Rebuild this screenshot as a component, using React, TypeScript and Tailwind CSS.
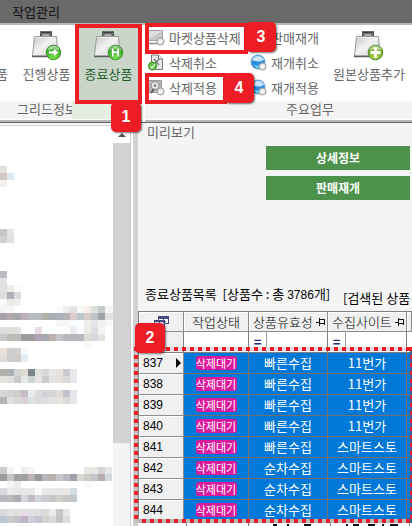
import type { ReactNode } from "react"
import { clsx } from "clsx"

type Cells = [y: number, start: number, colors: string]

// Redacted text in the tree panel, 7px blocks
const mosaic: Cells[] = [
  [166, 0, "e0e0df"],
  [173, 0, "d2c9c4 dde8f3"],
  [180, 0, "f3f0f1"],
  [229, 0, "cac6c8 e2e6e4"],
  [236, 0, "d0d0cf dfe2e1"],
  [271, 0, "bbbbc0"],
  [278, 0, "e1e2e1"],
  [285, 0, "e1e1df efecea f8fafd"],
  [292, 0, "dfddd9 b0b0b7 dcdadb"],
  [299, 0, "f9f9f7 ebe8e5 eaefef"],
  [306, 0, "f5f3f5 f7f6f7"],
  [306, 8, "fafafa eeecec e2e1e4 f8f8f8 f8efeb dcdfda c6cccb f3f4f3 f6f6f6"],
  [313, 0, "a8a3aa b3a8ab a6a7ac bcafbb b7bcbf babdbf b4b1aa a9acb0 abafba b5b5b7 d8cccd bcc6cf d6cdc9 bfc6c5 a0a4a7 dfe0df dfe1e1"],
  [320, 8, "f8f7f7 f8f8f9 f8fbfd fbfcfd f0efed e3e6e9 f3f1f0 f8f7f6"],
  [327, 0, "dededd dfdfd9 e0e1e6 ffffff ffffff e8dbe2 ffffff fdfdff ffffff ffffff efecf1 ffffff edebe3 dcdee4 f5f3f3"],
  [334, 0, "c6c9c5 bcbab6 bbbcb5 9b9a9e 9c9c9f b3a5b8 a1a9ad bdb2ae c5c6ca b9b8c0 bcb7bb b8b5be dedcd8 d6d8e0 e6e4dc"],
  [341, 12, "f8f8f8"],
  [348, 0, "e9e0da c9ced0 d3cfcb f4fbff"],
  [355, 0, "dddcdb cdccca cfcbc8 e5ecf6"],
  [369, 0, "b3b0a9 a9b2b8 d5d5d6 e0dad5 7b858a e2e3e0 d6d9d8 e7e8e7 e4e2d9 c8cacd e7e7ec"],
  [376, 0, "e5e3de dfdfde cacaca e8e8e5 cfd4d4 e5e4e0 c9cdcd e3e4e3 e4e1da d8d9d8 e6e6ec"],
  [390, 0, "d5d5d7 d3d2d3 d0cfca c8bbc8 e8efed dcdce0 d5d2d7 d6d6d9 e1ddd5 c1c3cc e6e5eb"],
  [397, 0, "b3b3b6 e0e0e4 d8d8d4 dccfd8 dce2e2 dadadd dedde1 dfe3e1 e5e4df d9dad9 e6e6eb"],
  [467, 0, "cacbca f2f4f3 ffffff efedf1 f8f6f7"],
  [467, 12, "e9e7e3 e7e7e1 d8d3d9 e4e8e8"],
  [474, 0, "9e9b9e c3c6c5 a2a2a3 9fa0a0 bbb2b8 9a9a9d b7b5c0 bbb2b0 c5c7ca b8b9c1 a29eab d9dad5 cdccc7 c2c4c7 b5abb0 d3d9db"],
  [481, 1, "f3f3f2 ecebf0"],
  [481, 12, "fafafb"],
  [488, 0, "d9d8dc ebeaea e8e8e8 e8e8e9 e8e8e8 f8f8f7 e8e8e8 e8e8e9 e8e8e8 ece8e4 d6dde0"],
  [495, 0, "babac0 bdb9bb adadb0 d7d5dd c2bbc0 d2d5d9 cbccd4 c5c7c6 cfd0cc c8c6c6 c0c8ce"],
  [509, 0, "d8d8dd dfe0df dfe0dd e4dce7 e0dee3 dfdee3 d9dbdb eceaea c7c7c9 e8e8e8"],
  [516, 0, "bac7d4 cec9c2 c3c1c9 bfb1c2 cdcfd8 c5c3cf cfd5cd dad9df c6c4c5 dcdde2"],
]

const rows = [
  { no: 837, valid: "빠른수집", site: "11번가" },
  { no: 838, valid: "빠른수집", site: "11번가" },
  { no: 839, valid: "빠른수집", site: "11번가" },
  { no: 840, valid: "빠른수집", site: "11번가" },
  { no: 841, valid: "빠른수집", site: "스마트스토" },
  { no: 842, valid: "순차수집", site: "스마트스토" },
  { no: 843, valid: "순차수집", site: "스마트스토" },
  { no: 844, valid: "순차수집", site: "스마트스토" },
]

function CaseIcon({ kind }: { kind: "arrow" | "stop" | "plus" }) {
  return (
    <svg width="32" height="31" viewBox="0 0 32 31" className="shrink-0" aria-hidden="true">
      <defs>
        <linearGradient id={`case-${kind}`} x1="0" y1="0" x2="1" y2="1">
          <stop offset="0" stopColor="#c4c4c4" />
          <stop offset=".45" stopColor="#f2f2f2" />
          <stop offset="1" stopColor="#cfcfcf" />
        </linearGradient>
        <radialGradient id={`orb-${kind}`} cx=".5" cy=".75" r=".7">
          <stop offset="0" stopColor={kind === "plus" ? "#b6dc4a" : "#7df04a"} />
          <stop offset="1" stopColor={kind === "plus" ? "#5f9e1c" : "#1f9a17"} />
        </radialGradient>
      </defs>
      <path d="M9 0h12v6H9Z" fill="#6a6a6a" />
      <path d="M10 1.500h10" stroke="#3d3d3d" />
      <path d="M11.500 3h7v2.500h-7Z" fill="#a8a8a8" />
      <path d="M9.500 3v3M20.500 3v3" stroke="#444" />
      <path d="M3.500 5.500h22l1.500 19.500H1.500Z" fill={`url(#case-${kind})`} stroke="#9c9c9c" />
      <path d="M4 6.500h21" stroke="#efefef" />
      <path d="M1 25.500h26" stroke="#5c5c5c" strokeWidth="1.500" />
      <circle cx="22.500" cy="21.500" r="7.300" fill={`url(#orb-${kind})`} stroke="#4c8f35" />
      <path d="M16.500 19.500a6.200 6.200 0 0 1 12 0q-6-3-12 0Z" fill="#fff" opacity=".55" />
      {kind === "arrow" && <path d="M17.500 20h5v-3l5.500 4.500-5.500 4.500v-3h-5Z" fill="#fff" stroke="#3a9a2a" strokeWidth=".6" />}
      {kind === "stop" && <path d="M18.500 17h2.500v3h3v-3h2.500v9H24v-3.500h-3V26h-2.500Z" fill="#fff" stroke="#3a9a2a" strokeWidth=".6" />}
      {kind === "plus" && <path d="M21 16.500h3V20h3.500v3H24v3.500h-3V23h-3.500v-3H21Z" fill="#fff" />}
    </svg>
  )
}

function SmallIcon({ kind }: { kind: "monitor" | "cancel" | "disk" | "globe" }) {
  return (
    <svg width="17" height="17" viewBox="0 0 17 17" className="shrink-0" aria-hidden="true">
      {kind === "monitor" && (
        <>
          <path d="M.5 1.500h14v10H.5Z" fill="#c8c8c8" stroke="#a5a5a5" />
          <path d="M1 2h13L1 10Z" fill="#dedede" />
          <path d="M1 14.500h11" stroke="#8a8a8a" strokeWidth="1.500" />
        </>
      )}
      {kind === "cancel" && (
        <>
          <path d="M3.500 1h7l4 4v10.500h-11Z" fill="#e8e8e8" stroke="#777" />
          <path d="M10.500 1v4h4" fill="#fff" stroke="#777" />
          <path d="m6 5 5 6M11 5l-5 6" stroke="#777" strokeWidth="1.200" />
        </>
      )}
      {kind === "disk" && (
        <>
          <path d="M.5 1.500h13v12H.5Z" fill="#b9b9b9" stroke="#999" />
          <circle cx="7" cy="6.500" r="4" fill="#e9e9e9" stroke="#888" />
          <circle cx="7" cy="6.500" r="1.300" fill="#777" />
          <path d="m3 14 3-4" stroke="#555" strokeWidth="1.500" />
        </>
      )}
      {kind === "globe" && (
        <>
          <circle cx="8" cy="8" r="7" fill="#2b8de0" stroke="#6fa3cc" />
          <path d="M2 6a6.500 6.500 0 0 1 12 0q-6 3-12 0Z" fill="#c9e5fa" />
          <path d="M3.500 10.500q4 2 8 0l-2 3.500h-3Z" fill="#6bd2ff" />
        </>
      )}
      {kind === "cancel" ? (
        <>
          <circle cx="4.500" cy="12" r="4" fill="#62c33c" stroke="#3c8c26" />
          <path d="m2.500 12.500 1.500 1.500 3-4" fill="none" stroke="#fff" strokeWidth="1.200" />
        </>
      ) : (
        <>
          <circle cx="12.500" cy="12.500" r="3.500" fill="#e6e6e6" stroke="#9a9a9a" />
          <path d="m11 12.500 1 1.200 2-2.500" fill="none" stroke="#fff" strokeWidth="1.200" />
        </>
      )}
    </svg>
  )
}

function PinIcon() {
  return (
    <svg width="10" height="8" viewBox="0 0 10 8" className="shrink-0" shapeRendering="crispEdges" aria-hidden="true">
      <path d="M0 4.500h3M3.500 0v8M4 1.500h4.500v5M4 5.500h5" fill="none" stroke="#111" />
    </svg>
  )
}

function Badge({ children, className }: { children: ReactNode; className: string }) {
  return (
    <span
      className={clsx(
        "absolute z-20 flex size-[30px] items-center justify-center rounded-[5px] bg-[#ee1c25] font-['Liberation_Sans',sans-serif] text-base font-bold text-white shadow-[1px_1px_2px_#0008]",
        className
      )}
    >
      {children}
    </span>
  )
}

function ToolButton({ kind, children }: { kind: "monitor" | "cancel" | "disk" | "globe"; children: ReactNode }) {
  return (
    <button className="flex h-[25px] items-center gap-1 whitespace-nowrap">
      <SmallIcon kind={kind} />
      {children}
    </button>
  )
}

function Ribbon() {
  return (
    <div className="flex border-b border-[#666] text-[13px] text-[#666]">
      <div className="w-[142px] shrink-0 border-b-2 border-[#b8b8b8]">
        <div className="flex h-[76px]">
          <button className="flex w-[14px] items-end justify-end pr-[6px] pb-[17px] leading-5">품</button>
          <button className="flex w-[61px] flex-col items-center pt-[6px] pl-1 leading-5 whitespace-nowrap">
            <CaseIcon kind="arrow" />
            <span className="mt-[2px]">진행상품</span>
          </button>
          <div className="relative flex-1">
            <button className="flex size-full flex-col items-center bg-[#c9d5c9] pt-[6px] leading-5 whitespace-nowrap text-[#1f5c2a]">
              <CaseIcon kind="stop" />
              <span className="mt-[2px]">종료상품</span>
            </button>
            <div className="pointer-events-none absolute inset-x-0 -top-px -bottom-[3px] z-10 border-4 border-[#ee1c25]" />
            <Badge className="right-px -bottom-[31px]">1</Badge>
          </div>
        </div>
        <div className="flex h-[19px] border-b border-white bg-[#f4f4f4] leading-4">
          <div className="w-[72px] overflow-hidden pl-[17px] whitespace-nowrap">그리드정보</div>
          <div className="flex-1 bg-[#e4efe2]" />
        </div>
      </div>

      <div className="ml-[3px] min-w-0 flex-1 border-b-2 border-[#b8b8b8]">
        <div className="flex h-[76px]">
          <div className="flex w-[102px] shrink-0 flex-col pl-[3px]">
            <div className="relative">
              <ToolButton kind="monitor">마켓상품삭제</ToolButton>
              <div className="pointer-events-none absolute -top-[2px] -right-px -bottom-1 -left-[3px] z-10 border-4 border-[#ee1c25]" />
              <Badge className="-top-[3px] left-[98px]">3</Badge>
            </div>
            <ToolButton kind="cancel">삭제취소</ToolButton>
            <div className="relative">
              <ToolButton kind="disk">삭제적용</ToolButton>
              <div className="pointer-events-none absolute -top-[2px] right-5 -bottom-1 -left-[3px] z-10 border-4 border-[#ee1c25]" />
              <Badge className="-top-[2px] left-[76px]">4</Badge>
            </div>
          </div>
          <div className="flex w-[82px] shrink-0 flex-col pl-[3px]">
            <ToolButton kind="globe">판매재개</ToolButton>
            <ToolButton kind="globe">재개취소</ToolButton>
            <ToolButton kind="globe">재개적용</ToolButton>
          </div>
          <button className="flex w-[80px] shrink-0 flex-col items-center pt-[6px] leading-5 whitespace-nowrap">
            <CaseIcon kind="plus" />
            <span className="mt-[2px]">원본상품추가</span>
          </button>
        </div>
        <div className="h-[19px] border-b border-white bg-[#f4f4f4] pl-[141px] leading-4">주요업무</div>
      </div>
    </div>
  )
}

function TreePanel() {
  return (
    <div className="flex w-[131px] shrink-0 border-r border-[#c8c8c8] bg-[#f4f4f4] pt-[2px]">
      <div className="w-[113px] border-t border-[#d0d0d0] bg-white">
        <svg width="113" height="397" viewBox="0 126 113 397" className="block" shapeRendering="crispEdges" aria-hidden="true">
          {mosaic.map(([y, start, colors]) =>
            colors.split(" ").map((c, i) => (
              <rect key={`${y}-${start + i}`} x={(start + i) * 7} y={y} width="7" height="7" fill={`#${c}`} />
            ))
          )}
        </svg>
      </div>
      <div className="flex flex-1 flex-col border-t border-[#d0d0d0]">
        <div className="flex h-[17px] items-center justify-center bg-white">
          <svg width="8" height="4" viewBox="0 0 8 4" aria-hidden="true">
            <path d="M0 4 4 0l4 4Z" fill="#555" />
          </svg>
        </div>
        <div className="h-[300px] bg-[#d2d2d2]" />
      </div>
    </div>
  )
}

const th = "border-r border-b border-[#8c8c8c] bg-[#f0f0f0] p-0 font-light whitespace-nowrap shadow-[inset_1px_1px_0_#fff]"
const td = "border-r border-b border-[#76706c] bg-[#0078d7] p-0 text-center font-normal whitespace-nowrap text-white overflow-hidden"

function FilterCell({ label }: { label: string }) {
  return (
    <td className="border-r border-b border-[#808080] bg-white p-0">
      <div className="flex h-5">
        <span className="flex w-[18px] items-center justify-center border-r border-[#a0a0a0] font-bold text-[#2b2b7a]">=</span>
        <input aria-label={label} className="w-0 flex-1 outline-none" />
      </div>
    </td>
  )
}

function ProductGrid() {
  return (
    <div className="relative">
      <table className="w-full table-fixed border-separate border-spacing-0 border-t border-l border-[#808080] text-[13px] leading-4 font-light text-black">
        <colgroup>
          <col className="w-[45px]" />
          <col className="w-[65px]" />
          <col className="w-[79px]" />
          <col className="w-[79px]" />
          <col />
        </colgroup>
        <thead>
          <tr className="h-5">
            <th className={th}>
              <svg width="15" height="11" viewBox="0 0 15 11" className="mx-auto" shapeRendering="crispEdges" aria-label="열 선택">
                <path d="M4.500.5h10v7h-10Z" fill="#fff" stroke="#404a80" />
                <path d="M4 1.500h11" stroke="#404a80" strokeWidth="2" />
                <path d="M.5 4.500h10v6H.5Z" fill="#dfe3f5" stroke="#404a80" />
                <path d="M1 5.500h9M5.500 5v5M9.500 3v4M7.500 5h4" stroke="#404a80" />
              </svg>
            </th>
            <th className={th}>작업상태</th>
            <th className={th}>
              <div className="flex items-center justify-between pr-px pl-1">상품유효성<PinIcon /></div>
            </th>
            <th className={th}>
              <div className="flex items-center justify-between pr-px pl-1">수집사이트<PinIcon /></div>
            </th>
            <th className={th} />
          </tr>
          <tr className="h-[21px]">
            <td className="border-r border-b border-[#808080] bg-[#f0f0f0] p-0" />
            <td className="border-r border-b border-[#808080] bg-white p-0" />
            <FilterCell label="상품유효성" />
            <FilterCell label="수집사이트" />
            <td className="border-b border-[#808080] bg-white p-0" />
          </tr>
        </thead>
        <tbody>
          {rows.map((row, i) => (
            <tr key={row.no} className="h-[21px]">
              <th scope="row" className={th}>
                <div className="flex items-center justify-between pr-[2px] pl-1 font-['Liberation_Sans',sans-serif] text-xs leading-4 font-normal">
                  {row.no}
                  {i === 0 && (
                    <svg width="5" height="10" viewBox="0 0 5 10" aria-hidden="true">
                      <path d="m0 0 5 5-5 5Z" />
                    </svg>
                  )}
                </div>
              </th>
              <td className={td}>
                <span className="mx-auto block h-[14px] w-[41px] rounded-[3px] bg-[#dc1a9c] text-[11px] leading-[14px]">삭제대기</span>
              </td>
              <td className={td}>{row.valid}</td>
              <td className={td}>{row.site}</td>
              <td className={td} />
            </tr>
          ))}
        </tbody>
      </table>
      {/* Dotted highlight around the selected rows */}
      <div className="pointer-events-none absolute top-9 -right-[2px] -bottom-[2px] -left-1 z-10">
        <div className="absolute inset-x-0 top-0 h-1 bg-[repeating-linear-gradient(90deg,#ee1c25_0_4px,#e4dada_4px_8px)]" />
        <div className="absolute inset-x-0 bottom-0 h-1 bg-[repeating-linear-gradient(90deg,#ee1c25_0_4px,#b9b9b9_4px_8px)]" />
        <div className="absolute inset-y-0 left-0 w-1 bg-[repeating-linear-gradient(180deg,#ee1c25_0_4px,#c4c4c4_4px_8px)]" />
        <div className="absolute inset-y-0 right-0 w-1 bg-[repeating-linear-gradient(180deg,#ee1c25_0_4px,#2a5f9a_4px_8px)]" />
      </div>
      <Badge className="top-3 -left-[3px]">2</Badge>
    </div>
  )
}

export default function App() {
  return (
    <div className="flex min-h-screen w-full flex-col overflow-hidden bg-white font-['Noto_Sans_CJK_KR',sans-serif]">
      <header className="h-[25px] border-b-2 border-[#b9b9b9] bg-[#696969] pl-3 text-[13px] leading-6 text-[#111]">작업관리</header>
      <Ribbon />
      <main className="flex flex-1">
        <TreePanel />
        <div className="ml-[2px] w-[5px] shrink-0 bg-[#d2d2d2]" />
        <section className="flex min-w-0 flex-1 flex-col bg-[#f4f4f4]">
          <h2 className="h-[23px] pl-[9px] text-[13px] leading-[18px] text-[#666]">미리보기</h2>
          <div className="mr-[2px] ml-32 flex flex-col gap-[6px] text-xs font-bold text-white">
            <button className="h-6 bg-[#4d924b]">상세정보</button>
            <button className="h-6 bg-[#4d924b]">판매재개</button>
          </div>
          <div className="mt-[84px] flex h-[27px] gap-2 overflow-hidden pl-[7px] text-[13px] leading-5 font-normal whitespace-pre text-black">
            <span className="w-[190px] shrink-0">종료상품목록  [상품수 : 총 <span className="font-['Liberation_Sans',sans-serif] text-xs">3786</span>개]</span>
            <span className="pt-1">[검색된 상품</span>
          </div>
          <ProductGrid />
          {/* Top edge of the next row */}
          <div className="flex-1 overflow-hidden bg-white">
            <svg width="274" height="5" viewBox="0 0 274 5" shapeRendering="crispEdges" aria-hidden="true">
              <path d="M48.500 2v3M110.500 2v3M192.500 2v3M271.500 2v3" stroke="#808080" />
              <path d="M135 4h4M149 4h2M166 4h7M208 4h2M215 4h6M230 4h7M244 4h2M252 4h8" stroke="#111" strokeWidth="2" />
            </svg>
          </div>
        </section>
      </main>
    </div>
  )
}
